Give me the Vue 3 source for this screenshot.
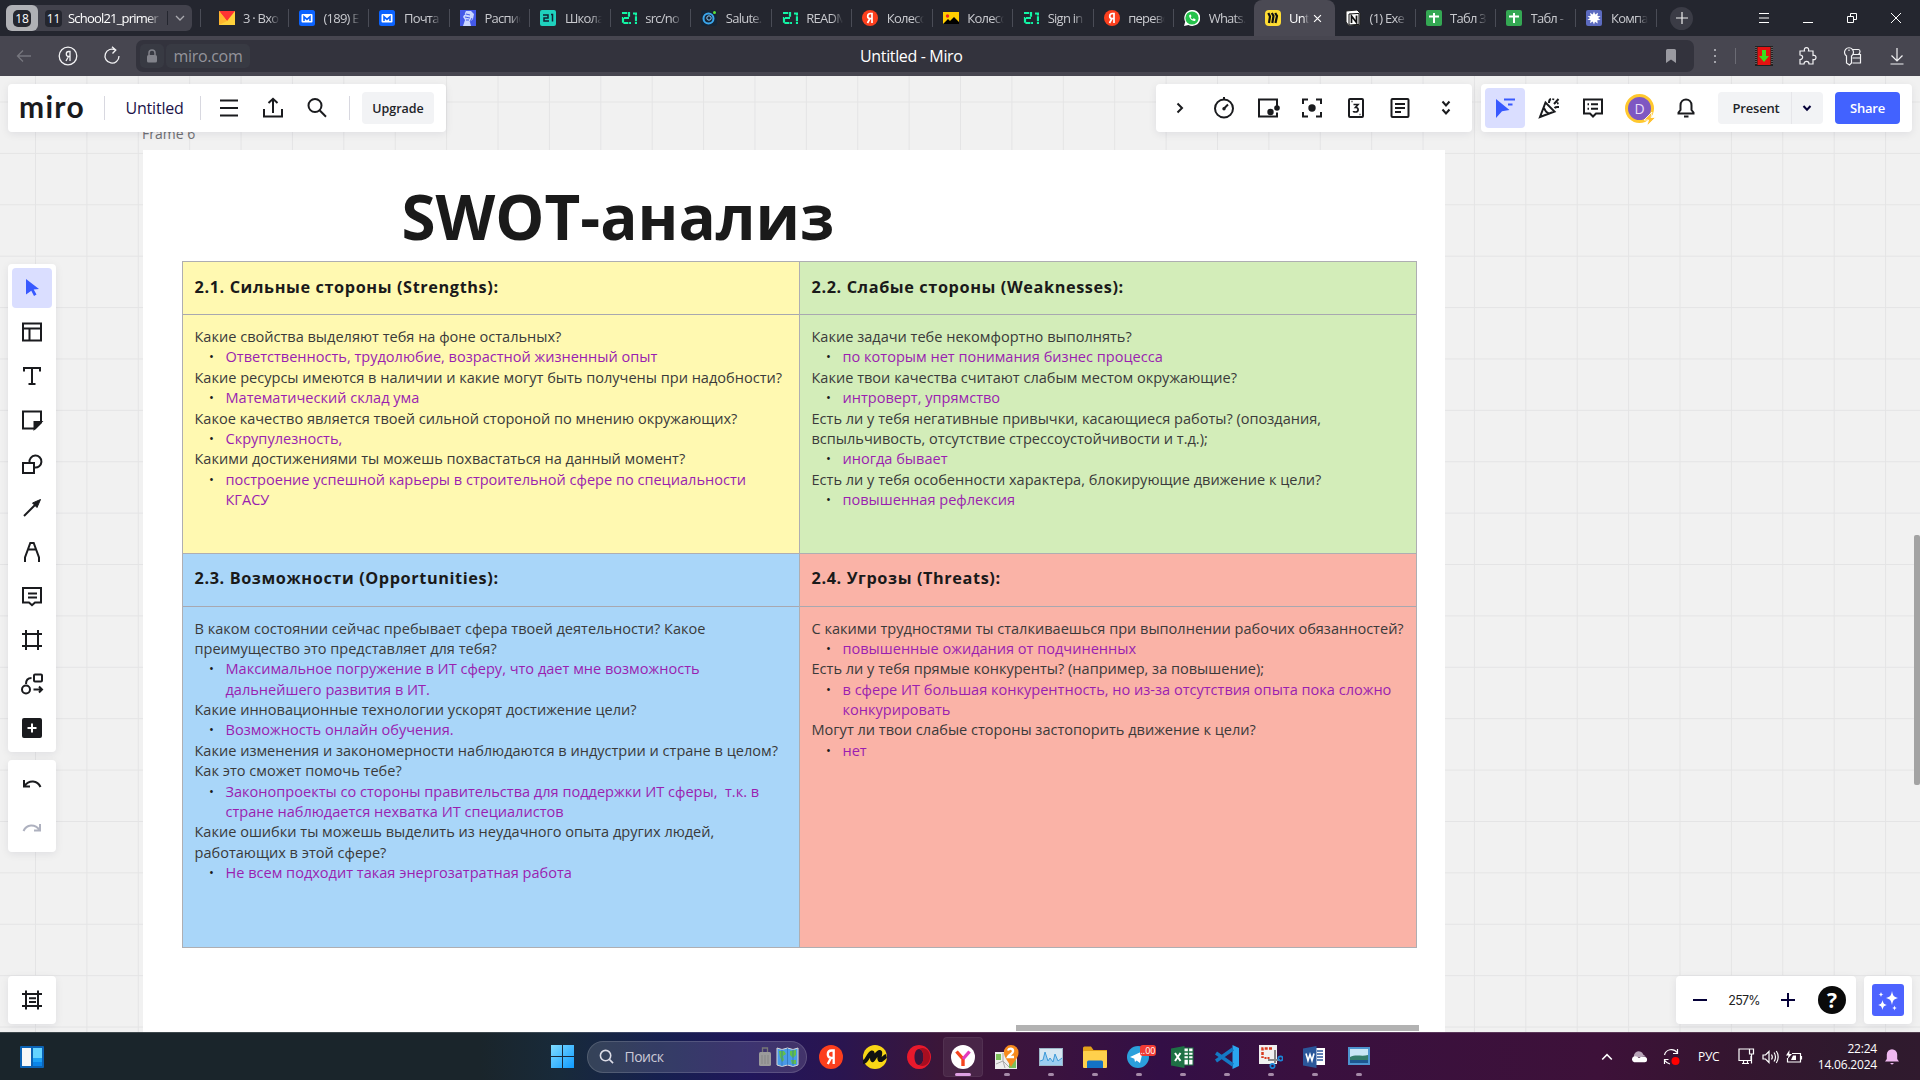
<script setup>
const tabs = [
  { icon: 'mail', text: '3 · Вхо' },
  { icon: 'vk', text: '(189) Е' },
  { icon: 'vk', text: 'Почта' },
  { icon: 'face', text: 'Распис' },
  { icon: 's21b', text: 'Школа' },
  { icon: 's21', text: 'src/no' },
  { icon: 'salute', text: 'Salute.' },
  { icon: 's21', text: 'READM' },
  { icon: 'ya', text: 'Колесо' },
  { icon: 'pic', text: 'Колесо' },
  { icon: 's21', text: 'Sign in' },
  { icon: 'ya', text: 'перево' },
  { icon: 'wa', text: 'Whats.' },
  { icon: 'miro', text: 'Unt', active: true },
  { icon: 'notion', text: '(1) Exe' },
  { icon: 'sheet', text: 'Табл 3' },
  { icon: 'sheet', text: 'Табл -' },
  { icon: 'burst', text: 'Компа' },
]

const glyph = {
  mail: '<path d="M0 1h16v14H0z" fill="#ffd13b"/><path d="M0 1h16L8 11z" fill="#f33"/><path d="M0 1l8 10L0 15z" fill="#ffb52e"/>',
  vk: '<rect width="16" height="16" rx="2.500" fill="#0b63ff"/><rect x="2.500" y="4" width="11" height="8.500" rx="1" fill="#fff"/><path d="M5 11V6.800l3 2.600 3-2.600V11" stroke="#0b63ff" stroke-width="1.600" fill="none"/>',
  face: '<rect width="16" height="16" fill="#4459e8"/><path d="M6 1l5 0 3 3-1 5-3 3 1 4H3l2-6-2-3z" fill="#c9d6ff"/><path d="M6 4l4 1M5 7l5 1M6 10l3 0M3 2l2 3M12 8l-2 4" stroke="#4459e8"/>',
  s21b: '<rect width="16" height="16" rx="2" fill="#1fd1bd"/><path d="M3 5h5v3H4v3h5M11 4.500h1.500v7" stroke="#123" fill="none" stroke-width="1.500"/>',
  s21: '<path d="M1 3h7v4.500M8 8H2v5h8M12 3.500h3V14" stroke="#12f5a5" fill="none" stroke-width="2.200" stroke-dasharray="5 .7"/>',
  salute: '<rect width="16" height="16" rx="3" fill="#162536"/><circle cx="7.500" cy="8.500" r="5" fill="none" stroke="#3aa7ee" stroke-width="2"/><circle cx="8" cy="8" r="2.200" fill="none" stroke="#8ad0ff"/><circle cx="13.500" cy="2.500" r="1.500" fill="#5be03a"/>',
  ya: '<circle cx="8" cy="8" r="8" fill="#fc3f1d"/><path d="M10 13V3.500H8.500C6.500 3.500 5.700 5 5.700 6.200c0 1.500 1 2.300 2.300 2.300H10M8 8.500L5.500 13" stroke="#fff" stroke-width="1.700" fill="none"/>',
  pic: '<rect y="2" width="16" height="12" fill="#fc0"/><path d="M0 14l5-5 2 2 4-4 5 5v2z" fill="#000"/><circle cx="4.500" cy="6" r="1.700" fill="#e22"/>',
  wa: '<path d="M0 16l1.200-4.300A8 8 0 1 1 4.500 15z" fill="#fff"/><circle cx="8" cy="8" r="6.600" fill="#25c24b"/><path d="M5.300 5c-1 2.500 3 7 6 5.700l.3-1.400-2-1-.9.900C7.500 8.800 7 8 6.700 7.200l.8-.9L6.800 4.500z" fill="#fff"/>',
  miro: '<rect width="16" height="16" rx="4" fill="#ffdd33"/><path d="M3.300 3l1.700 3.500L4 13M6.800 3l1.700 3L7.300 13M10.200 3L12 6l-1.500 7" stroke="#111" stroke-width="2.200" fill="none"/>',
  notion: '<path d="M1 1l11-1 3 3v12l-11 1-3-4z" fill="#fff" stroke="#222"/><path d="M4 4l10-.6v11L4 15z" fill="#fff" stroke="#111"/><path d="M6.500 13V6l5 6.500V5.500" stroke="#111" stroke-width="1.700" fill="none"/>',
  sheet: '<rect width="16" height="16" rx="2" fill="#34a853"/><path d="M8 3v10M3 6.500h10" stroke="#fff" stroke-width="2"/>',
  burst: '<rect width="16" height="16" rx="2" fill="#5c6bc0"/><path d="M8 1.500l1.200 3L12 2.700l-.6 3.200 3.200.4L12 8l2.500 2-3.200.3.400 3.200-2.700-1.800L8 14.500l-1.300-3-2.600 1.800.5-3.200-3.200-.2L4 8 1.500 6.200l3.200-.3L4 2.700l2.800 1.800z" fill="#fff"/>',
}

const tool = {
  cursor: '<path d="M6 3l13 10-5.300.6 2.800 5-2.500 1.300-2.700-5.200L6 18.500z" fill="#3859ff" stroke="none"/>',
  table: '<rect x="3" y="3.500" width="18" height="17"/><path d="M3 8.500h18M9.500 8.500v12"/>',
  text: '<path d="M4 7.500V4h16v3.500M12 4v16M8.500 20h7"/>',
  note: '<path d="M3 20.500V3.500h18v11l-6 6z"/><path d="M21 14h-6.500v6.500z" fill="#1a1b1e"/>',
  shapes: '<path d="M9.500 10.500a6 6 0 1 1 5 5"/><rect x="3" y="11" width="11" height="10"/>',
  arrow: '<path d="M4 20L17 7"/><path d="M20.500 3.500l-8 3.500 4.500 4.500z" fill="#1a1b1e" stroke-width="1"/>',
  pen: '<path d="M5 22v-4.500L10.300 3h3.400L19 17.500V22M8.500 9.500h7"/>',
  comment: '<path d="M3 4h18v14.500h-6l-3 2.700-3-2.700H3zM8 9.500h9M8 13.500h9"/>',
  frame: '<path d="M6 2v20M18 2v20M2 6h20M2 18h20"/>',
  flow: '<circle cx="6" cy="17.500" r="4"/><rect x="14" y="2.500" width="8" height="7" rx="1"/><path d="M6 12c0-4 1.500-6 5.500-6M13.500 17.500H22M19 14.500l3 3-3 3"/>',
  plus: '<rect x="3" y="3" width="18" height="18" rx="1" fill="#1a1b1e"/><path d="M12 7.500v9M7.500 12h9" stroke="#fff"/>',
  undo: '<path d="M4 8v6.500h6M4.500 14C9 7.500 17.500 8 20.500 15"/>',
  redo: '<path d="M20 8v6.500h-6M19.500 14C15 7.500 6.500 8 3.500 15" stroke="#aeb1bf"/>',
  list: '<path d="M6 2.500v19M18 2.500v19M2 6h20M2 18h20M9 10.200h7M9 14h7"/>',
  menu: '<path d="M3 4.500h18M3 12h18M3 19.500h18"/>',
  share: '<path d="M3 13v7.500h18V13M12 17V3M7.500 7L12 2.800 16.500 7"/>',
  search: '<circle cx="10" cy="9.500" r="6.500"/><path d="M14.800 14.500l6.200 6.200"/>',
  right: '<path d="M9.500 7.500L14 12l-4.500 4.500"/>',
  timer: '<circle cx="12" cy="12.500" r="9"/><path d="M12 1v3M16 8.500l-4 4" /><circle cx="12" cy="12.700" r="1.700" fill="#1a1b1e" stroke="none"/>',
  video: '<path d="M21 10V3.500H3v17h18v-4"/><circle cx="14.500" cy="16" r="3.200" fill="#1a1b1e" stroke="none"/><circle cx="21" cy="12" r="2.800" fill="#1a1b1e" stroke="none"/>',
  focus: '<path d="M3 8V3.500h5M16 3.500h5V8M21 16v4.500h-5M8 20.500H3V16"/><circle cx="12" cy="12" r="3.700" fill="#1a1b1e" stroke="none"/>',
  card: '<rect x="5" y="3" width="14" height="18" rx="1"/><path d="M9.500 8.500h4.500l-2.500 3c3.500 0 3.500 4.500 0 4.500-1 0-2-.4-2-1" stroke-width="1.700"/><path d="M7.500 5.500h1M15.500 18.500h1" stroke-width="1.500"/>',
  doc: '<rect x="3.500" y="3" width="17" height="18" rx="1"/><path d="M7 8h10M7 12h10M7 16h6"/>',
  chevs: '<path d="M9.500 5.500l3.500 4 3.500-4M9.500 13.500l3.500 4 3.500-4"/>',
  cursorline: '<path d="M3 3l13.500 11L9 15.200 3 22z" fill="#3859ff" stroke="none"/><path d="M11 3.500h11M15 8.500h4.500" stroke="#3859ff"/>',
  party: '<path d="M3 21L8.500 6.500l9 9zM7 12c1 3 3 5 5.500 6M12 7c0-2 0-3.500 2-4M17 8l4.500-5M17.500 12c1.500-1.500 3-1 4.500-1M16 4l.5-1.500M20 7.500l1.500-.5"/>',
  chat: '<path d="M3 3.500h18v14h-6l-3 3-3-3H3z"/><path d="M10 8.300h7M10 12.700h7M6.500 8.300H8M6.500 12.700H8"/>',
  bell: '<path d="M4.500 17.500v-1l2-2.500V9.500c0-8 11-8 11 0V14l2 2.500v1zM10 20.500h4.500"/>',
}

const left = ['cursor', 'table', 'text', 'note', 'shapes', 'arrow', 'pen', 'comment', 'frame', 'flow', 'plus']
const mid = ['right', 'timer', 'video', 'focus', 'card', 'doc', 'chevs']

const cells = [
  {
    cls: 'yellow', title: '2.1. Сильные стороны (Strengths):',
    lines: [
      ['q', 'Какие свойства выделяют тебя на фоне остальных?'],
      ['a', 'Ответственность, трудолюбие, возрастной жизненный опыт'],
      ['q', 'Какие ресурсы имеются в наличии и какие могут быть получены при надобности?'],
      ['a', 'Математический склад ума'],
      ['q', 'Какое качество является твоей сильной стороной по мнению окружающих?'],
      ['a', 'Скрупулезность,'],
      ['q', 'Какими достижениями ты можешь похвастаться на данный момент?'],
      ['a', 'построение успешной карьеры в строительной сфере по специальности'],
      ['c', 'КГАСУ'],
    ],
  },
  {
    cls: 'green', title: '2.2. Слабые стороны (Weaknesses):',
    lines: [
      ['q', 'Какие задачи тебе некомфортно выполнять?'],
      ['a', 'по которым нет понимания бизнес процесса'],
      ['q', 'Какие твои качества считают слабым местом окружающие?'],
      ['a', 'интроверт, упрямство'],
      ['q', 'Есть ли у тебя негативные привычки, касающиеся работы? (опоздания,'],
      ['q', 'вспыльчивость, отсутствие стрессоустойчивости и т.д.);'],
      ['a', 'иногда бывает'],
      ['q', 'Есть ли у тебя особенности характера, блокирующие движение к цели?'],
      ['a', 'повышенная рефлексия'],
    ],
  },
  {
    cls: 'blue', title: '2.3. Возможности (Opportunities):',
    lines: [
      ['q', 'В каком состоянии сейчас пребывает сфера твоей деятельности? Какое'],
      ['q', 'преимущество это представляет для тебя?'],
      ['a', 'Максимальное погружение в ИТ сферу, что дает мне возможность'],
      ['c', 'дальнейшего развития в ИТ.'],
      ['q', 'Какие инновационные технологии ускорят достижение цели?'],
      ['a', 'Возможность онлайн обучения.'],
      ['q', 'Какие изменения и закономерности наблюдаются в индустрии и стране в целом?'],
      ['q', 'Как это сможет помочь тебе?'],
      ['a', 'Законопроекты со стороны правительства для поддержки ИТ сферы,  т.к. в'],
      ['c', 'стране наблюдается нехватка ИТ специалистов'],
      ['q', 'Какие ошибки ты можешь выделить из неудачного опыта других людей,'],
      ['q', 'работающих в этой сфере?'],
      ['a', 'Не всем подходит такая энергозатратная работа'],
    ],
  },
  {
    cls: 'red', title: '2.4. Угрозы (Threats):',
    lines: [
      ['q', 'С какими трудностями ты сталкиваешься при выполнении рабочих обязанностей?'],
      ['a', 'повышенные ожидания от подчиненных'],
      ['q', 'Есть ли у тебя прямые конкуренты? (например, за повышение);'],
      ['a', 'в сфере ИТ большая конкурентность, но из-за отсутствия опыта пока сложно'],
      ['c', 'конкурировать'],
      ['q', 'Могут ли твои слабые стороны застопорить движение к цели?'],
      ['a', 'нет'],
    ],
  },
]

const apps = [
  { art: '<circle cx="12" cy="12" r="12" fill="#fc3f1d"/><path d="M14.700 19V5.500h-2C10 5.500 8.800 7.300 8.800 9.200c0 2.300 1.500 3.600 3.400 3.600h2.500M12 12.800L8.800 19" stroke="#fff" stroke-width="2.300" fill="none"/>' },
  { art: '<circle cx="12" cy="12" r="12" fill="#f9d616"/><path d="M0 17c4 0 5-8 9-9.500 1.500 0-1 6 .5 7.500 2-1 3.500-7 7-8 2 0-1.500 7 .5 8 3 0 4-3.500 6.500-4" stroke="#111" stroke-width="4.200" fill="none" stroke-linejoin="round"/>' },
  { art: '<path d="M12 0a12 12 0 1 0 .01 0zm0 4c3 0 4.500 4 4.500 8s-1.500 8-4.500 8-4.500-4-4.500-8 1.500-8 4.500-8z" fill="#e8192c" fill-rule="evenodd"/><path d="M12 4c5-3 11 1 11 8s-6 11-11 8c6 0 6-16 0-16z" fill="#a70e20"/>' },
  { art: '<circle cx="12" cy="12" r="12" fill="#fff"/><path d="M5.500 6.500L12 14v7" stroke="#f5431d" stroke-width="3.400" fill="none"/><path d="M18.500 6.500L12 14" stroke="#e43bbd" stroke-width="3.400"/>', on: true },
  { art: '<rect x="0" y="7" width="22" height="17" fill="#eee"/><path d="M1 9h5v6H1zM14 15h7v8h-7z" fill="#7cc05a"/><path d="M1 19l7-3 2 7M8 8v8l6 6" stroke="#aaa" fill="none"/><path d="M16 0a7.500 7.500 0 0 1 7.500 8c0 5-5 9-7.500 14-2-5-7-9-7-14a7 7 0 0 1 7-8z" fill="#f78a1d"/><path d="M13 5.500c1-3 5.500-2 5 1-.3 2-4 3.500-5 5.500h6" stroke="#fff" stroke-width="2.300" fill="none"/>', dot: true },
  { art: '<rect x=".5" y="3.500" width="23" height="17" fill="#d7e7f2" stroke="#9cb6c7"/><path d="M1 16l3-1 2-8 3 9 2-3 3 4 2-8 3 7 4-3v7H1z" fill="#9ccdf0"/><path d="M1 16l3-1 2-8 3 9 2-3 3 4 2-8 3 7 4-3" fill="none" stroke="#3f9ad8"/>', dot: true },
  { art: '<path d="M0 3a1.500 1.500 0 0 1 1.500-1.500H8L10.500 5H24v17H0z" fill="#e3a21a"/><rect y="6" width="24" height="17" rx="1" fill="#ffd04c"/><path d="M4 23v-6a1.500 1.500 0 0 1 1.500-1.500h13A1.500 1.500 0 0 1 20 17v6z" fill="#1472c4"/>', dot: true },
  { art: '<circle cx="11" cy="12" r="11" fill="#2ba0dc"/><path d="M3 12l13-6-3 12-3.500-2.500L8 17l-.7-3.300z" fill="#fff"/>', dot: true, badge: '..00' },
  { art: '<rect x="12" y="3" width="10" height="17" fill="#fff" stroke="#1e7145"/><path d="M12 7h10M12 10.500h10M12 14h10M17.500 3v17" stroke="#1e7145" stroke-width="1.300"/><path d="M0 3.500L13.500 1v22L0 20.500z" fill="#1e7145"/><path d="M4 8l5.500 8M9.500 8L4 16" stroke="#fff" stroke-width="2"/>', dot: true },
  { art: '<path d="M17.500 0L24 3v18l-6.500 3z" fill="#2aa5ef"/><path d="M1 8l17 12M1 16L18 4" stroke="#1479c4" stroke-width="3.500"/>', dot: true },
  { art: '<path d="M0 0h18v19H0z" fill="#f1f1f1"/><path d="M13 3.500H3.500V13" fill="none" stroke="#d83b1f" stroke-width="2.500" stroke-dasharray="3 1.300"/><path d="M5.500 13h5" stroke="#d83b1f" stroke-width="2" stroke-dasharray="2 1"/><path d="M16 5v13M9 15h12" stroke="#888" stroke-width="2"/><circle cx="13.500" cy="21" r="2.200" fill="none" stroke="#1a86d8" stroke-width="1.700"/><circle cx="21.500" cy="13.500" r="2.200" fill="none" stroke="#1a86d8" stroke-width="1.700"/>', dot: true },
  { art: '<rect x="12" y="3" width="10" height="17" fill="#fff"/><path d="M14 6h6M14 9h6M14 12h6M14 15h6" stroke="#2b579a" stroke-width="1.400"/><path d="M0 3.500L13.500 1v22L0 20.500z" fill="#2b579a"/><path d="M3 8.500L5 15.500l2-6 2 6 2-7" stroke="#fff" stroke-width="1.600" fill="none"/>', dot: true },
  { art: '<rect x="1" y="2" width="22" height="18" fill="#4d94cf"/><rect x="3" y="4" width="18" height="14" fill="#c9e6f5"/><path d="M3 12c6-3 12 0 18-2v8H3z" fill="#357d6b"/><path d="M3 15h18v3H3z" fill="#1d5790"/>', dot: true },
]
</script>

<template>
  <div class="screen">
    <header class="tabstrip">
      <div class="group">
        <span class="pill"><b>18</b></span>
        <span class="eleven">11</span>
        <span class="gname">School21_primer</span>
        <i class="gsep"></i>
        <svg class="gchev" viewBox="0 0 10 10"><path d="M1 3l4 4 4-4" /></svg>
      </div>
      <div class="tabs">
        <div v-for="(t, i) in tabs" :key="i" class="tab" :class="{ active: t.active, before: i === 12 }">
          <svg class="fav" viewBox="0 0 16 16" v-html="glyph[t.icon]"></svg>
          <span class="ttext">{{ t.text }}</span>
          <svg v-if="t.active" class="close" viewBox="0 0 10 10"><path d="M1.200 1.200l7.600 7.600M8.800 1.200L1.200 8.800" /></svg>
        </div>
      </div>
      <span class="newtab"><svg viewBox="0 0 12 12"><path d="M6 0v12M0 6h12" /></svg></span>
      <div class="winbtns">
        <svg viewBox="0 0 12 12"><path d="M1 1.500h10M1 6h10M1 10.500h10" /></svg>
        <svg viewBox="0 0 12 12"><path d="M1 10.500h10" /></svg>
        <svg viewBox="0 0 12 12"><path d="M1.500 4.500h6v6h-6zM4.500 4.500v-3h6v6h-3" /></svg>
        <svg viewBox="0 0 12 12"><path d="M1 1l10 10M11 1L1 11" /></svg>
      </div>
    </header>

    <nav class="addr">
      <svg class="nav dim" viewBox="0 0 20 20"><path d="M17 10H3.500M9 4.500L3.500 10 9 15.500" /></svg>
      <svg class="nav" viewBox="0 0 20 20"><circle cx="10" cy="10" r="8.800" /><path d="M12 15V5.500h-1.300c-3.200 0-3.200 5 0 5H12M10.500 10.500L8 15" /></svg>
      <svg class="nav" viewBox="0 0 20 20"><path d="M13.500 4A7 7 0 1 0 17 10M10 .8L13.800 4 10.500 7.500" /></svg>
      <div class="field">
        <span class="lock"><svg viewBox="0 0 12 14"><rect x="1" y="6" width="10" height="7.500" rx="1.500" fill="#82838b" /><path d="M3 6V4a3 3 0 0 1 6 0v2" fill="none" stroke="#82838b" stroke-width="1.500" /></svg></span>
        <span class="host">miro.com</span>
        <span class="ptitle">Untitled - Miro</span>
        <svg class="mark" viewBox="0 0 10 14"><path d="M0 1.500A1.500 1.500 0 0 1 1.500 0h7A1.500 1.500 0 0 1 10 1.500V14L5 10.500 0 14z" fill="#9a9aa1" /></svg>
      </div>
      <svg class="dots" viewBox="0 0 4 14"><path d="M1 0h2v2H1zM1 6h2v2H1zM1 12h2v2H1z" fill="#a3a3aa" /></svg>
      <i class="asep"></i>
      <svg class="ext" viewBox="0 0 20 20"><path d="M1 0h18v20H1z" fill="#222" /><path d="M3.500 1h13v18h-13z" fill="#e41212" /><path d="M8 4h4v6h3l-5 6-5-6h3z" fill="#3be01d" /><path d="M2 1v18M18 1v18" stroke="#999" stroke-dasharray="1 1" /></svg>
      <svg class="ext line" viewBox="0 0 20 20"><path d="M2 5h4.500C5 .5 12 .5 10.500 5H15v4.500c4-1.500 4 5.500 0 4V18h-4c0-3.500-5-3.500-5 0H2v-4.500c3.500 0 3.500-4.500 0-4.500z" /></svg>
      <svg class="ext line" viewBox="0 0 20 20"><path d="M3.500 10a4.500 4.500 0 1 1 5 0v7l-2 2-3-2zM6 3.500v1.500M9.500 3.500h6c2 0 2 4 0 4.500M9.500 8.500h8V17h-8M9.500 12h8" /></svg>
      <svg class="ext line" viewBox="0 0 20 20"><path d="M10 2v12.500M4.500 9.500L10 15l5.500-5.500M3.500 18h13" /></svg>
    </nav>

    <main class="board">
      <span class="flabel">Frame 6</span>
      <section class="sheet">
        <h1>SWOT-анализ</h1>
        <div class="swot">
          <article v-for="c in cells" :key="c.title" :class="c.cls">
            <h2>{{ c.title }}</h2>
            <div class="body">
              <p v-for="(l, i) in c.lines" :key="i" :class="l[0]">{{ l[1] }}</p>
            </div>
          </article>
        </div>
      </section>
      <i class="strip"></i>
      <i class="scroll"></i>

      <div class="panel top1">
        <span class="logo">miro</span><i></i>
        <span class="bname">Untitled</span><i></i>
        <svg v-for="n in ['menu', 'share', 'search']" :key="n" class="ic" viewBox="0 0 24 24" v-html="tool[n]"></svg>
        <i></i>
        <button class="upgrade">Upgrade</button>
      </div>
      <div class="panel top2">
        <svg v-for="n in mid" :key="n" class="ic" viewBox="0 0 24 24" v-html="tool[n]"></svg>
      </div>
      <div class="panel top3">
        <span class="sel"><svg class="ic" viewBox="0 0 24 24" v-html="tool.cursorline"></svg></span>
        <svg class="ic" viewBox="0 0 24 24" v-html="tool.party"></svg>
        <svg class="ic" viewBox="0 0 24 24" v-html="tool.chat"></svg>
        <span class="avatar">D<svg viewBox="0 0 12 14"><path d="M8 0L0 8h4.500L3 14l8.500-8.500H7z" fill="#ffc233" stroke="#fff" stroke-width=".8" /></svg></span>
        <svg class="ic" viewBox="0 0 24 24" v-html="tool.bell"></svg>
        <div class="present"><span>Present</span><em><svg viewBox="0 0 10 8"><path d="M1.500 2L5 5.800 8.500 2" /></svg></em></div>
        <button class="share">Share</button>
      </div>

      <div class="panel side">
        <span v-for="(n, i) in left" :key="n" :class="{ on: i === 0 }"><svg class="ic" viewBox="0 0 24 24" v-html="tool[n]"></svg></span>
      </div>
      <div class="panel hist">
        <span><svg class="ic" viewBox="0 0 24 24" v-html="tool.undo"></svg></span>
        <span><svg class="ic" viewBox="0 0 24 24" v-html="tool.redo"></svg></span>
      </div>
      <div class="panel frames"><svg class="ic" viewBox="0 0 24 24" v-html="tool.list"></svg></div>
      <div class="panel zoom">
        <svg viewBox="0 0 14 14"><path d="M0 7h14" /></svg>
        <span>257%</span>
        <svg viewBox="0 0 14 14"><path d="M0 7h14M7 0v14" /></svg>
        <b>?</b>
      </div>
      <div class="panel ai">
        <span><svg viewBox="0 0 24 24"><path d="M16 3c1 5 1.700 5.800 6 7-4.300 1.200-5 2-6 7-1-5-1.700-5.800-6-7 4.300-1.200 5-2 6-7zM6.500 12c.7 3.400 1.400 4.200 4.500 5-3.100.8-3.800 1.600-4.500 5-.7-3.400-1.400-4.200-4.500-5 3.100-.8 3.800-1.600 4.500-5zM5 4c.4 1.700.8 2.100 2.500 2.500C5.800 6.900 5.400 7.300 5 9c-.4-1.700-.8-2.100-2.500-2.500C4.200 6.100 4.600 5.700 5 4zM18.500 17.500c.4 1.700.8 2.100 2.500 2.500-1.700.4-2.100.8-2.500 2.500-.4-1.700-.8-2.100-2.500-2.500 1.700-.4 2.100-.8 2.500-2.500z" fill="#fff" /></svg></span>
      </div>
    </main>

    <footer class="taskbar">
      <svg class="widget" viewBox="0 0 24 22"><rect width="24" height="22" rx="1" fill="#0b62b4" /><path d="M2 2h9v18H2z" fill="#f7f7f7" /><path d="M13 2h9v10h-9z" fill="#64d3ff" /><path d="M13 12h9v4h-9z" fill="#1ba0f5" /><path d="M13 16h9v4h-9z" fill="#0a84e8" /></svg>
      <svg class="win" viewBox="0 0 23 23"><defs><linearGradient id="wg" x1="0" y1="0" x2="1" y2="1"><stop offset="0" stop-color="#7fdcff" /><stop offset="1" stop-color="#0f9bff" /></linearGradient></defs><path d="M0 0h11v11H0zM12 0h11v11H12zM0 12h11v11H0zM12 12h11v11H12z" fill="url(#wg)" /></svg>
      <div class="find">
        <svg class="lens" viewBox="0 0 16 16"><circle cx="7" cy="7" r="5.500" /><path d="M11 11l4 4" /></svg>
        <span>Поиск</span>
        <svg class="bag" viewBox="0 0 12 20"><path d="M3.500 6V1h5v5" fill="none" stroke="#777" stroke-width="1.300" /><rect y="5" width="12" height="14" rx="1.500" fill="#9b9b9b" /><path d="M3 8v9M6 8v9M9 8v9" stroke="#858585" /></svg>
        <svg class="map" viewBox="0 0 23 20"><path d="M1 1l5 1.500L11.500 1 17 2.500 22 1v17l-5 1.500-5.500-1.500L6 19.500 1 18z" fill="#4a9be8" stroke="#d9d9d9" /><path d="M3 4l5 0 2 3-3 2 1 4-2 2-2-5zM14 4l6-1v5l-3 3-3-3zM15 13h5v4h-4z" fill="#62c04b" /><path d="M6 2.500v17M11.500 1v17M17 2.500v17" stroke="#2c6fb5" stroke-width=".7" /></svg>
      </div>
      <div class="apps">
        <span v-for="(a, i) in apps" :key="i" :class="{ on: a.on, dot: a.dot }"><svg viewBox="0 0 24 24" v-html="a.art"></svg><b v-if="a.badge">{{ a.badge }}</b></span>
      </div>
      <div class="tray">
        <svg class="t1" viewBox="0 0 12 12"><path d="M1.200 8.500L6 3.700l4.800 4.800" /></svg>
        <svg class="t2" viewBox="0 0 16 12"><path d="M3 7a4.500 4.500 0 0 1 8.500-3L14 6z" fill="#b8a5b8" stroke="none" /><path d="M3 11.500a3 3 0 0 1-.5-5.500 5 5 0 0 1 5 1.500l2-1.200 4 .2a2.600 2.600 0 0 1-.5 5z" fill="#fff" stroke="none" /></svg>
        <svg class="t3" viewBox="0 0 18 18"><path d="M1.500 7A7 7 0 0 1 14 4.500M14.500 1v4.500H10M1.500 16v-4.500h4M2 12.500a7 7 0 0 0 5 3.500" /><circle cx="12.500" cy="13" r="4" fill="#f00" stroke="none" /></svg>
        <span class="lang">РУС</span>
        <svg class="t4" viewBox="0 0 17 17"><path d="M11 1H1v11.500h12V8M4 15.500h7M5.500 12.500v3M9.500 12.500v3M11.500 1h4v5h-4zM13.500 6v9.500" /></svg>
        <svg class="t5" viewBox="0 0 17 14"><path d="M1 5v4h2.500L7 12.500v-11L3.500 5zM9.500 4.500c1 1.500 1 3.500 0 5M12 2.500c2 2.500 2 6.500 0 9M14.300 1c2.500 3.500 2.500 8.500 0 12" /></svg>
        <svg class="t6" viewBox="0 0 17 14"><path d="M6 3.500h8.500v8.500H1.500V8M15.500 6v3.500" /><path d="M7 5.500h3V10H5z" fill="#fff" stroke="none" /><path d="M3.500 0L0 5.500h2.500L1.500 9 6 4H3.300z" fill="#fff" stroke="none" /></svg>
        <div class="clock"><span>22:24</span><span>14.06.2024</span></div>
        <svg class="t7" viewBox="0 0 14 16"><path d="M0 12.500l1.800-2.500V5.500a5.200 5.200 0 0 1 10.400 0V10l1.800 2.500zM5 14h4l-2 1.800z" fill="#efb8f0" stroke="none" /></svg>
      </div>
    </footer>
  </div>
</template>

<style>
html, body { margin: 0; overflow: hidden; }
</style>

<style scoped>
.screen { width: 1920px; height: 1080px; display: flex; flex-direction: column; font-family: "Open Sans", "Noto Sans", sans-serif; overflow: hidden; }
.screen * { box-sizing: border-box; }
svg { display: block; flex: none; }

.tabstrip { height: 36px; flex: none; background: #24262f; display: flex; align-items: center; padding-left: 6px; color: #c9cacf; font-size: 13px; }
.group { width: 186px; height: 26px; background: #42424c; border-radius: 6px; display: flex; align-items: center; flex: none; color: #fff; margin-right: 8px; }
.pill { width: 32px; height: 26px; background: #b0b1b5; border-radius: 6px; display: flex; align-items: center; justify-content: center; }
.pill b { background: #24262f; width: 18px; height: 17px; border-radius: 5px; font-size: 12px; font-weight: 400; display: flex; align-items: center; justify-content: center; }
.eleven { width: 17px; height: 17px; background: #24262f; border-radius: 4px; font-size: 12px; margin-left: 7px; display: flex; align-items: center; justify-content: center; }
.gname { width: 93px; margin-left: 6px; overflow: hidden; white-space: nowrap; letter-spacing: -.8px; -webkit-mask-image: linear-gradient(90deg, #000 85%, transparent); mask-image: linear-gradient(90deg, #000 85%, transparent); }
.gsep { width: 1px; height: 14px; background: #24262f; margin-left: 6px; }
.gchev { width: 10px; height: 10px; margin-left: 7px; stroke: #aaaab0; fill: none; stroke-width: 1.300; }
.tabs { width: 1457px; height: 36px; display: flex; flex: none; }
.tabs::before { content: ""; width: 1px; height: 18px; background: #4a4c56; margin-top: 9px; }
.tab { width: 80.470px; height: 36px; display: flex; align-items: center; flex: none; padding-left: 17.500px; position: relative; }
.tab::after { content: ""; position: absolute; right: -7.500px; top: 9px; width: 1px; height: 18px; background: #4a4c56; }
.tab.before::after, .tab.active::after { display: none; }
.fav { width: 16px; height: 16px; }
.ttext { width: 37px; margin-left: 8.500px; white-space: nowrap; overflow: hidden; letter-spacing: -.75px; -webkit-mask-image: linear-gradient(90deg, #000 70%, transparent); mask-image: linear-gradient(90deg, #000 70%, transparent); }
.tab.active { z-index: 0; color: #fff; }
.tab.active::before { content: ""; position: absolute; z-index: -1; left: 6.500px; top: 0; width: 81px; height: 36px; background: #4a4953; border-radius: 8px 8px 0 0; }
.tab.active .ttext { width: 20px; }
.close { width: 9px; height: 9px; margin-left: 4px; stroke: #fff; fill: none; stroke-width: 1.300; }
.newtab { width: 23px; height: 23px; border-radius: 50%; background: #3b3c46; display: flex; align-items: center; justify-content: center; margin-left: 13px; }
.newtab svg { width: 12px; height: 12px; stroke: #eee; stroke-width: 1.200; }
.winbtns { margin-left: auto; display: flex; gap: 32px; padding-right: 18px; }
.winbtns svg { width: 12px; height: 12px; stroke: #fff; stroke-width: 1; fill: none; }

.addr { height: 40px; flex: none; background: #474650; display: flex; align-items: center; padding-left: 14px; }
.nav { width: 20px; height: 20px; stroke: #f2f2f4; fill: none; stroke-width: 1.300; margin-right: 24px; }
.nav.dim { stroke: #76767e; }
.field { width: 1558px; height: 32px; flex: none; margin-left: -10px; background: #33333d; border-radius: 7px; display: flex; align-items: center; padding-left: 4px; }
.lock { width: 24px; height: 24px; background: #383a43; border-radius: 5px; display: flex; align-items: center; justify-content: center; }
.lock svg { width: 12px; height: 14px; }
.host { height: 24px; width: 84px; margin-left: 2px; background: #383a43; border-radius: 5px; color: #94949b; font-size: 16px; line-height: 24px; text-align: center; letter-spacing: -.3px; }
.ptitle { color: #fff; font-size: 16px; letter-spacing: -.35px; margin-left: 610px; white-space: nowrap; }
.mark { width: 10px; height: 14px; margin-left: auto; margin-right: 18px; }
.dots { width: 4px; height: 14px; margin-left: 19px; }
.asep { width: 1px; height: 16px; background: #6b6b74; margin: 0 18px 0 18px; }
.ext { width: 20px; height: 20px; margin-right: 24.300px; }
.ext:last-child { margin-right: 0; }
.ext.line { fill: none; stroke: #f2f2f4; stroke-width: 1.200; }

.board { height: 956px; flex: none; position: relative; overflow: hidden; background-color: #f1f1f1; background-image: linear-gradient(90deg, #e4e4e5 1px, transparent 1px), linear-gradient(#e4e4e5 1px, transparent 1px); background-size: 51.400px 51.400px; background-position: 35px 25.500px; }
.flabel { position: absolute; left: 142px; top: 48px; font-size: 14px; line-height: 20px; color: #6f6f73; }
.sheet { width: 1302px; height: 883px; margin: 74px 0 0 143px; background: #fff; padding: 27px 0 0 39px; }
h1 { margin: 0 0 6px 219.500px; font-size: 61.800px; line-height: 78px; height: 78px; font-weight: 700; color: #1a1a1a; letter-spacing: 0; white-space: nowrap; }
.swot { width: 1235px; display: grid; grid-template-columns: 616px 616px; grid-template-rows: 291px 393px; gap: 1px; padding: 1px; background: #aeaeb2; }
article { display: flex; flex-direction: column; color: #1a1a1a; }
.yellow { background: #fff9b1; }
.green { background: #d3edb9; }
.blue { background: #a9d6f9; }
.red { background: #fab3a7; }
h2 { height: 53px; flex: none; margin: 0; padding: 0 0 0 11.500px; font-size: 16.300px; font-weight: 700; line-height: 50px; border-bottom: 1px solid #a8a8b0; letter-spacing: .600px; white-space: nowrap; }
.blue h2, .red h2 { line-height: 48px; }
.body { padding: 11px 0 0 11.500px; }
.blue .body, .red .body { padding-top: 10.500px; }
p { margin: 0; font-size: 14.550px; line-height: 20.370px; color: #3a3a3a; white-space: pre; position: relative; }
p.a, p.c { color: #9a1fb0; padding-left: 31px; }
p.a::before { content: "•"; position: absolute; left: 14.500px; font-size: 13px; color: #1a1a1a; }
.strip { position: absolute; left: 1016px; top: 949px; width: 403px; height: 6px; background: #b2b2b2; }
.scroll { position: absolute; right: 0; top: 459px; width: 6px; height: 250px; background: #a3a3a3; border-radius: 2px; }

.panel { position: absolute; background: #fff; border-radius: 4px; box-shadow: 0 2px 8px rgba(5, 0, 56, .08); display: flex; align-items: center; color: #1a1b1e; }
.ic { width: 24px; height: 24px; fill: none; stroke: #1a1b1e; stroke-width: 2; }
.top1 { left: 8px; top: 8px; width: 438px; height: 48px; }
.top1 > i { width: 1px; height: 24px; background: #d8d8e0; }
.logo { width: 96px; padding-left: 11px; font-family: Lato, "Open Sans", sans-serif; font-weight: 700; font-size: 30px; line-height: 40px; letter-spacing: 1.300px; padding-bottom: 5px; }
.bname { width: 95px; padding-left: 20.500px; color: #1b1248; font-size: 16px; letter-spacing: -.2px; }
.top1 .ic { margin-left: 17px; margin-right: 3px; }
.top1 .bname + i + .ic { margin-left: 16px; }
.top1 .ic + i { margin-left: 17px; }
button { border: 0; font-family: inherit; font-weight: 600; padding: 0; border-radius: 4px; }
.upgrade { width: 72px; height: 32px; margin-left: 12px; background: #f2f3f5; color: #222428; font-size: 12.500px; letter-spacing: 0; }
.top2 { left: 1156px; top: 8px; width: 316px; height: 48px; padding-left: 12px; gap: 20.100px; }
.top3 { left: 1481px; top: 8px; width: 431px; height: 48px; padding-left: 4px; }
.sel { width: 40px; height: 40px; background: #dadeff; border-radius: 4px; display: flex; align-items: center; justify-content: center; margin-right: 12px; }
.top3 > .ic { margin-right: 20px; }
.avatar { width: 29px; height: 29px; border: 3px solid #ffc82e; border-radius: 50%; background: #7e57c2; color: #e8def8; font-size: 14px; display: flex; align-items: center; justify-content: center; position: relative; margin: 0 20px 0 0; }
.avatar svg { position: absolute; right: -5px; bottom: -6px; width: 12px; height: 14px; }
.present { width: 105px; height: 32px; background: #f2f3f5; border-radius: 4px; display: flex; align-items: center; font-size: 13px; font-weight: 600; color: #222428; }
.present span { width: 73px; text-align: center; padding-left: 3px; letter-spacing: -.2px; }
.present em { height: 32px; width: 31px; border-left: 1px solid #e6e6ea; display: flex; align-items: center; justify-content: center; }
.present svg { width: 10px; height: 8px; fill: none; stroke: #050038; stroke-width: 2; }
.share { width: 65px; height: 32px; margin-left: 12px; background: #4262ff; color: #fff; font-size: 13px; letter-spacing: -.2px; }
.side { left: 8px; top: 188px; width: 48px; height: 488px; flex-direction: column; padding-top: 4px; gap: 4px; }
.side span, .hist span { width: 40px; height: 40px; display: flex; align-items: center; justify-content: center; border-radius: 4px; flex: none; }
.side .on { background: #dadeff; }
.hist { left: 8px; top: 684px; width: 48px; height: 92px; flex-direction: column; padding-top: 4px; gap: 4px; }
.frames { left: 8px; top: 900px; width: 48px; height: 48px; justify-content: center; }
.zoom { left: 1676px; top: 900px; width: 180px; height: 48px; padding-left: 17px; }
.zoom svg { width: 14px; height: 14px; stroke: #050038; stroke-width: 2; }
.zoom span { width: 74px; text-align: center; font-size: 12.500px; letter-spacing: -.8px; font-family: Inter, sans-serif; color: #222; }
.zoom b { width: 28px; height: 28px; border-radius: 50%; background: #0a0a0a; color: #fff; margin-left: 23px; font-size: 21px; line-height: 28px; text-align: center; }
.ai { left: 1864px; top: 900px; width: 48px; height: 48px; justify-content: center; }
.ai span { width: 32px; height: 32px; background: #4d63ff; border-radius: 3px; display: flex; align-items: center; justify-content: center; }
.ai svg { width: 24px; height: 24px; }

.taskbar { height: 48px; flex: none; display: flex; align-items: center; border-top: 1px solid rgba(255, 255, 255, .16); background: linear-gradient(90deg, #1a252b 0, #1a252b 480px, #182a3a 560px, #16204f 660px, #21165b 750px, #2a1550 840px, #3b1639 940px, #3b133d 1040px, #330f46 1160px, #39103f 1300px, #3d1139 1600px, #351530 1720px, #2e1a2d 1860px, #301a2e 1920px); background-origin: border-box; padding-left: 20px; color: #fff; font-size: 14px; }
.widget { width: 24px; height: 22px; }
.win { width: 23px; height: 23px; margin-left: 507px; }
.find { width: 220px; height: 32px; margin-left: 13px; border: 1px solid rgba(255, 255, 255, .14); border-radius: 16px; background: rgba(255, 255, 255, .13); display: flex; align-items: center; color: #cbc9d6; padding-left: 11px; }
.find span { margin-left: 10.500px; width: 134.500px; font-size: 14px; letter-spacing: -.5px; }
.lens { width: 15px; height: 15px; fill: none; stroke: #dcdce6; stroke-width: 1.700; }
.bag { width: 12px; height: 20px; }
.map { width: 23px; height: 20px; margin-left: 5px; }
.apps { display: flex; gap: 4px; margin-left: 4px; }
.apps span { width: 40px; height: 40px; border-radius: 4px; display: flex; align-items: center; justify-content: center; position: relative; }
.apps svg { width: 24px; height: 24px; }
.apps .on { background: rgba(255, 255, 255, .07); border: 1px solid rgba(255, 255, 255, .06); }
.apps .on::after, .apps .dot::after { content: ""; position: absolute; bottom: 1px; left: 17px; width: 6px; height: 3px; border-radius: 2px; background: #a58aa8; }
.apps .on::after { left: 11px; bottom: 0; width: 16px; background: #dfa0e4; }
.apps b { position: absolute; left: 21px; top: 8px; width: 16px; height: 11px; border-radius: 3px; background: #f23c34; font-size: 9px; line-height: 11px; font-weight: 400; text-align: center; }
.tray { margin-left: auto; display: flex; align-items: center; }
.tray svg { fill: none; stroke: #fff; stroke-width: 1.200; }
.t1 { width: 12px; height: 12px; }
.tray .t1 { stroke-width: 1.600; }
.t2 { width: 17px; height: 13px; margin-left: 18px; }
.t3 { width: 18px; height: 18px; margin-left: 15px; }
.lang { margin-left: 17px; width: 22px; font-size: 12px; letter-spacing: -.3px; white-space: nowrap; }
.t4 { width: 17px; height: 17px; margin-left: 18px; }
.t5 { width: 17px; height: 14px; margin-left: 7px; }
.t6 { width: 17px; height: 14px; margin-left: 7px; }
.clock { width: 74px; display: flex; flex-direction: column; text-align: right; font-size: 12px; line-height: 16px; letter-spacing: -.2px; }
.t7 { width: 14px; height: 16px; margin: 0 21px 0 8px; }
</style>
